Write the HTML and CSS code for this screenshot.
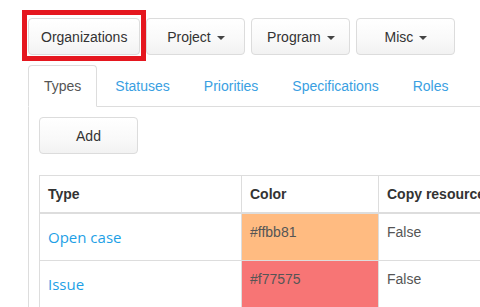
FILE: index.html
```html
<!DOCTYPE html>
<html lang="en">
<head>
    <meta charset="UTF-8">
    <meta name="viewport" content="width=device-width, initial-scale=1.0">
    <title>Types</title>
    <link rel="stylesheet" href="styles.css">
</head>
<body>
    <div class="page">
        <div class="toolbar">
            <button class="btn">Organizations</button>
            <button class="btn">Project <span class="caret"></span></button>
            <button class="btn">Program <span class="caret"></span></button>
            <button class="btn">Misc <span class="caret"></span></button>
        </div>
        <div class="highlight"></div>

        <ul class="tabs">
            <li class="tab active"><a href="#">Types</a></li>
            <li class="tab"><a href="#">Statuses</a></li>
            <li class="tab"><a href="#">Priorities</a></li>
            <li class="tab"><a href="#">Specifications</a></li>
            <li class="tab"><a href="#">Roles</a></li>
        </ul>

        <div class="tab-content">
            <button class="btn">Add</button>
            <table class="grid">
                <thead>
                    <tr>
                        <th class="col-type">Type</th>
                        <th class="col-color">Color</th>
                        <th>Copy resources</th>
                    </tr>
                </thead>
                <tbody>
                    <tr>
                        <td><a class="type-link" href="#">Open case</a></td>
                        <td style="background-color: #ffbb81">#ffbb81</td>
                        <td>False</td>
                    </tr>
                    <tr>
                        <td><a class="type-link" href="#">Issue</a></td>
                        <td style="background-color: #f77575">#f77575</td>
                        <td>False</td>
                    </tr>
                </tbody>
            </table>
        </div>
    </div>
</body>
</html>
```

FILE: styles.css
```css
body {
    margin: 0;
    font-family: "Liberation Sans", Arial, sans-serif;
    font-size: 14px;
    line-height: 20px;
    color: #333;
    background-color: #fff;
    overflow: hidden;
}
.page {
    position: relative;
    width: 640px;
    padding: 18px 0 0 28px;
}
.toolbar {
    display: flex;
    gap: 6px;
    margin-bottom: 10px;
}
.btn {
    min-width: 99px;
    height: 37px;
    padding: 0 12px;
    font-family: inherit;
    font-size: 14px;
    color: #333;
    background-image: linear-gradient(to bottom, #fff 0%, #f9f9f9 60%, #f2f2f2 100%);
    border: 1px solid #dcdcdc;
    border-radius: 4px;
    cursor: pointer;
}
.caret {
    display: inline-block;
    width: 0;
    height: 0;
    margin-left: 2px;
    vertical-align: middle;
    border-top: 4px solid #444;
    border-left: 4px solid transparent;
    border-right: 4px solid transparent;
}
.highlight {
    position: absolute;
    left: 22px;
    top: 10px;
    width: 114px;
    height: 41px;
    border: 5px solid #e5171f;
}
.tabs {
    display: flex;
    margin: 0;
    padding: 0;
    list-style: none;
    border-bottom: 1px solid #ddd;
}
.tab {
    margin-right: 2px;
    margin-bottom: -1px;
}
.tab a {
    display: block;
    padding: 10px 15px;
    color: #3a9fe2;
    text-decoration: none;
    border: 1px solid transparent;
    border-radius: 4px 4px 0 0;
}
.tab.active a {
    color: #555;
    background-color: #fff;
    border-color: #ddd #ddd transparent;
}
.tab-content {
    padding: 10px;
    border-left: 1px solid #ddd;
    border-right: 1px solid #ddd;
}
.grid {
    width: 590px;
    margin-top: 21px;
    border-collapse: collapse;
    border: 1px solid #ddd;
}
.grid th, .grid td {
    padding: 8px;
    text-align: left;
    vertical-align: top;
    border: 1px solid #ddd;
}
.grid th {
    font-weight: bold;
    border-bottom-width: 2px;
}
.grid td {
    color: #555;
}
.col-type {
    width: 185px;
}
.col-color {
    width: 120px;
}
.type-link {
    display: block;
    font-family: "Open Sans", "Noto Sans", sans-serif;
    font-size: 15px;
    line-height: 30px;
    color: #1e9fe6;
    text-decoration: none;
}
```
